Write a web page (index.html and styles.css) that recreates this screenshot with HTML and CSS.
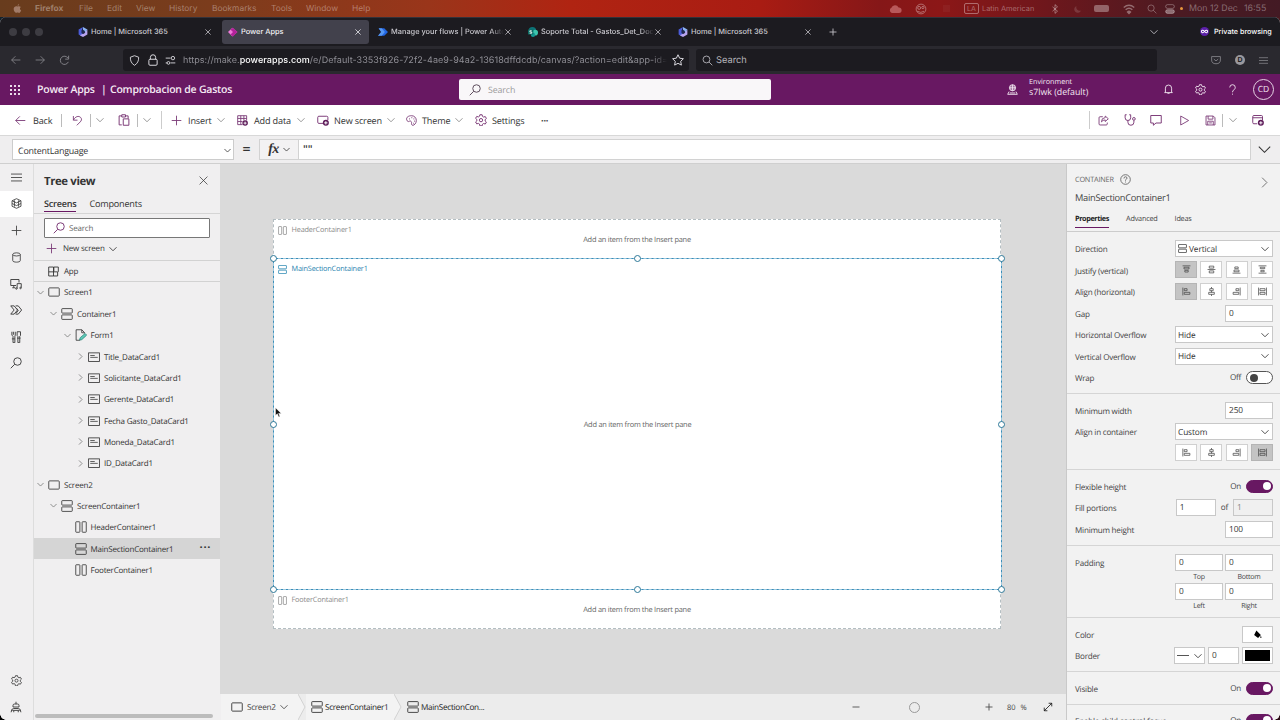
FILE: index.html
```html
<!DOCTYPE html>
<html lang="es">
<head>
<meta charset="utf-8">
<title>Power Apps | Comprobacion de Gastos</title>
<link rel="stylesheet" href="styles.css">
</head>
<body>
<svg class="defs">
<symbol id="chev" viewBox="0 0 16 16"><path d="M1 4.500l7 7 7-7"/></symbol>
<symbol id="right" viewBox="0 0 16 16"><path d="M4.500 1l7 7-7 7"/></symbol>
<symbol id="x" viewBox="0 0 16 16"><path d="M1 1l14 14M15 1L1 15"/></symbol>
<symbol id="plus" viewBox="0 0 16 16"><path d="M8 1v14M1 8h14"/></symbol>
<symbol id="minus" viewBox="0 0 16 16"><path d="M1 8h14"/></symbol>
<symbol id="back" viewBox="0 0 16 16"><path d="M15 8H1M7 2L1 8l6 6"/></symbol>
<symbol id="fwd" viewBox="0 0 16 16"><path d="M1 8h14M9 2l6 6-6 6"/></symbol>
<symbol id="reload" viewBox="0 0 16 16"><path d="M13.500 10A6 6 0 1 1 13 4.500M14 1v5H9"/></symbol>
<symbol id="menu" viewBox="0 0 16 16"><path d="M0 3h16M0 8h16M0 13h16"/></symbol>
<symbol id="mag" viewBox="0 0 16 16"><circle cx="10" cy="6" r="5"/><path d="M6.300 9.700L1 15"/></symbol>
<symbol id="magL" viewBox="0 0 16 16"><circle cx="6.500" cy="6.500" r="5"/><path d="M10.300 10.300L15 15"/></symbol>
<symbol id="gear" viewBox="0 0 16 16"><path d="M6.500 1h3l.5 2.200 1.500.9 2.200-.7 1.500 2.600-1.700 1.500v1.800l1.700 1.500-1.500 2.600-2.200-.7-1.500.9-.5 2.200h-3L6 13.400l-1.500-.9-2.200.7L.8 10.600l1.700-1.500V7.300L.8 5.800l1.500-2.600 2.200.7L6 3z"/><circle cx="8" cy="8.200" r="2.200"/></symbol>
<symbol id="rect" viewBox="0 0 16 16"><rect x="1" y="2.500" width="14" height="11" rx="1"/></symbol>
<symbol id="vert" viewBox="0 0 16 16"><rect x="1" y=".8" width="14" height="6" rx=".8"/><rect x="1" y="9.200" width="14" height="6" rx=".8"/></symbol>
<symbol id="horz" viewBox="0 0 16 16"><rect x="1" y="1" width="5.500" height="14" rx=".8"/><rect x="9.500" y="1" width="5.500" height="14" rx=".8"/></symbol>
<symbol id="card" viewBox="0 0 16 16"><rect x=".8" y="2.500" width="14.400" height="11.500"/><path d="M3 6h6M3 8.500h10" stroke-width="1"/></symbol>
<symbol id="app" viewBox="0 0 16 16"><path d="M1 1.500h7v13H1zM1 8.500h13v6H8M8.500 8V1.500H15v7"/></symbol>
<symbol id="form" viewBox="0 0 16 16"><path d="M7 15H1.500V1H9l3.500 3.500V6M9 1v4h3.500"/><path class="teal" d="M6 14.500l1-3L13.500 6l2 2.200-6.500 6z"/></symbol>
<symbol id="undo" viewBox="0 0 16 16"><path d="M2 1.500v6h6M2 7.500C5 1.500 10 1 12.500 3.500s1 5-.5 6.500l-5 5"/></symbol>
<symbol id="paste" viewBox="0 0 16 16"><path d="M5 14.500H1.500v-12H5M10 2.500h3.500V6M5 1h5v3H5zM7 6.500h7.500V15H7z"/></symbol>
<symbol id="data" viewBox="0 0 16 16"><path d="M8 14H1V1h13v7M1 5h13M1 9.500h7M5.500 1v13M10 1v7"/><circle class="solid" cx="11.800" cy="11.800" r="4"/><path class="knock" d="M11.800 9.600V14M9.600 11.800H14"/></symbol>
<symbol id="newscr" viewBox="0 0 16 16"><path d="M8 12.500H2.500Q1 12.500 1 11V4.500Q1 3 2.500 3H13q1.500 0 1.500 1.500V8"/><circle class="solid" cx="11.800" cy="11.800" r="4"/><path class="knock" d="M11.800 9.600V14M9.600 11.800H14"/></symbol>
<symbol id="theme" viewBox="0 0 16 16"><path d="M1 7C0 3 4 1 8 1s7 3 7 7-3 7-5 7-2-2-2-3 .5-2-1-3-3 1-4 .5S1.200 8 1 7z"/><path d="M4.500 5.500h1M8 3.800h1M11 5.500h1M12 9h1M10.500 12h1" stroke-width="1.800"/></symbol>
<symbol id="share" viewBox="0 0 16 16"><path d="M7 2.500H3Q1.500 2.500 1.500 4v9q0 1.500 1.500 1.500h9q1.500 0 1.500-1.500v-2M10.500 1.500L15 5.500l-4.500 4V7.200Q7 7 5 10q0-6 5.500-6.200z"/></symbol>
<symbol id="steth" viewBox="0 0 16 16"><path d="M3.500 1H1.500v4a3.700 3.700 0 0 0 7.400 0V1H7M5.200 8.700V11a4 4 0 0 0 8 0V8.500"/><circle cx="13.200" cy="6.500" r="1.800"/></symbol>
<symbol id="chat" viewBox="0 0 16 16"><path d="M1 2h14v10H8l-3.500 3v-3H1z"/></symbol>
<symbol id="play" viewBox="0 0 16 16"><path d="M2.500 1.500L14 8 2.500 14.500z"/></symbol>
<symbol id="save" viewBox="0 0 16 16"><path d="M1.500 1.500H12L14.500 4v10.500h-13zM4.500 1.500V6h7V1.500M4 14.500V9h8v5.500M6 11.500h4"/></symbol>
<symbol id="pub" viewBox="0 0 16 16"><path d="M7 13H2.500Q1 13 1 11.500v-8Q1 2 2.500 2h10Q14 2 14 3.500V8M1 5h13"/><circle class="solid" cx="11.800" cy="11.800" r="4"/><path class="knock" d="M11.800 9.600V14M9.600 11.800H14"/></symbol>
<symbol id="layers" viewBox="0 0 16 16"><path d="M8 1l6.500 3L8 7 1.500 4zM1.500 4v8L8 15l6.500-3V4M1.500 8L8 11l6.500-3M5 3.500v9M11 3.500v9"/></symbol>
<symbol id="db" viewBox="0 0 16 16"><ellipse cx="8" cy="3.500" rx="5.500" ry="2.300"/><path d="M2.500 3.500v9c0 3 11 3 11 0v-9"/></symbol>
<symbol id="media" viewBox="0 0 16 16"><path d="M8 10H1V2h11v4M3 13h4M5 10v3"/><path d="M9.500 14V7.500H15V13"/><circle cx="8.500" cy="14" r="1"/><circle cx="14" cy="13.300" r="1"/></symbol>
<symbol id="flow" viewBox="0 0 16 16"><path d="M1 2.500h4.500L10 8l-4.500 5.500H1L5.500 8zM7.500 2.500H11L15.500 8 11 13.500H7.500M8.500 5.500L11 8.500l-3 4"/></symbol>
<symbol id="tools" viewBox="0 0 16 16"><path d="M2.500 1v4.500L4 7v8.500h2.500V7L7 5.500V1M4.500 1v4M9.500 1v5l1 1v8.500H13V7l1-1V1zM9.500 9.500H14M2.500 10.500h4"/></symbol>
<symbol id="bot" viewBox="0 0 16 16"><path d="M8 1v3M4 8V6q0-2 2-2h4q2 0 2 2v2zM1.500 15q0-5 3.500-5h6q3.500 0 3.500 5M3 12.500h10M5 15v-2M11 15v-2"/></symbol>
<symbol id="bell" viewBox="0 0 16 16"><path d="M2 12.500h12M3.500 12.500V6q0-4.500 4.500-4.500T12.500 6v6.500M6.500 13q1.500 3 3 0"/></symbol>
<symbol id="env" viewBox="0 0 16 16"><circle cx="8" cy="5.500" r="4.500"/><path d="M3.500 5.500h9M8 1v9M6 2q-1 3.500 0 7M10 2q1 3.500 0 7M3 11L1 15h14l-2-4M4 13h8"/></symbol>
<symbol id="m365" viewBox="0 0 16 16"><path d="M8 0l7 4-3 5-4-2z" fill="#8db4f5" stroke="none"/><path d="M8 0L1 4v8l5 3 2-5-2-4z" fill="#4b5cd8" stroke="none"/><path d="M15 4v8l-7 4-5-3 8-4z" fill="#b9a4ef" stroke="none"/><path d="M5.500 5.500L8 4.500l3 2v3L8 11 5.500 9.500z" fill="#20284f" stroke="none"/></symbol>
<symbol id="papps" viewBox="0 0 16 16"><path d="M7 1l8 7-8 7-7-7z" fill="#f07ada" stroke="none"/><path d="M8 1l7 7-7 7-4-3 4-4-4-4z" fill="#b3229a" stroke="none"/></symbol>
<symbol id="pauto" viewBox="0 0 16 16"><path d="M1 2h9l6 6-6 6H0l5-6z" fill="#2266e3" stroke="none"/><path d="M1 2h5l5 6-5 6H0l5-6z" fill="#6aa9f7" stroke="none" opacity=".75"/></symbol>
<symbol id="sp" viewBox="0 0 16 16"><circle cx="7" cy="6" r="6" fill="#0d7377" stroke="none"/><circle cx="11.500" cy="9" r="4.500" fill="#3cc5ad" stroke="none"/><circle cx="8" cy="12.500" r="3.500" fill="#169a93" stroke="none"/><rect x="0" y="4" width="8.500" height="8" rx="1" fill="#0b6b63" stroke="none"/><path d="M6 6H3v2h3v2H2.500" stroke="#fff"/></symbol>
<symbol id="j1" viewBox="0 0 16 16"><path d="M1 1.500h14M3.500 4h9v3h-9zM5 9.500h6v3H5z"/></symbol>
<symbol id="j2" viewBox="0 0 16 16"><path d="M4 2h8v3.500H4zM4 10.500h8V14H4zM1 8h14"/></symbol>
<symbol id="j3" viewBox="0 0 16 16"><path d="M1 14.500h14M5 3.500h6v3H5zM3.500 9h9v3h-9z"/></symbol>
<symbol id="j4" viewBox="0 0 16 16"><path d="M1 1.500h14M1 14.500h14M4 4h8v2.500H4zM5 9.500h6V12H5z"/></symbol>
<symbol id="a1" viewBox="0 0 16 16"><path d="M1.500 1v14M4 3h5v3.500H4zM4 9.500h10V13H4z"/></symbol>
<symbol id="a2" viewBox="0 0 16 16"><path d="M8 0v3M8 6.500v3M8 13v3M5 3h6v3.500H5zM3 9.500h10V13H3z"/></symbol>
<symbol id="a3" viewBox="0 0 16 16"><path d="M14.500 1v14M7 3h5v3.500H7zM2 9.500h10V13H2z"/></symbol>
<symbol id="a4" viewBox="0 0 16 16"><path d="M1 1v14M15 1v14M3.500 3h9v3.500h-9zM3.500 9.500h9V13h-9z"/></symbol>
</svg>

<div class="screen">
<div class="macbar">
<svg class="apple" viewBox="0 0 16 16"><path d="M11 0q0 3-3 3.500Q8 1 11 0zM8 4.500c2-1 4.500-1 6 1-2.500 1.500-2 5 .5 6-1.500 3.500-3 5-4.500 4-1.500-.7-2-.7-3.500 0C4 16.500 1 12 1.200 8.500 1.500 4.500 5 3.200 8 4.500z"/></svg>
<b>Firefox</b><span>File</span><span>Edit</span><span>View</span><span>History</span><span>Bookmarks</span><span>Tools</span><span>Window</span><span>Help</span>
<svg class="cloud" viewBox="0 0 16 10"><path d="M4 10a3.500 3.500 0 0 1-.5-6.500 5 5 0 0 1 9-.5A3.500 3.500 0 0 1 13 10z"/></svg>
<svg class="i s12" viewBox="0 0 16 16"><circle cx="8" cy="8" r="6.500"/><circle cx="5.500" cy="6.500" r="2"/><circle cx="10.500" cy="6" r="1.500"/><path d="M3 11q5 3 9 0"/></svg>
<i class="ghost"></i>
<span class="la">LA</span><span class="lang">Latin American</span>
<svg class="i s10" viewBox="0 0 16 16"><path d="M4 4.500l8 7L8 15V1l4 3.500-8 7" stroke-width="1.600"/></svg>
<svg class="moon" viewBox="0 0 16 16"><path d="M5 2a7 7 0 0 0 9 9A7 7 0 1 1 5 2z"/></svg>
<i class="batt"></i>
<svg class="i s12" viewBox="0 0 16 16"><path d="M1 6q7-6 14 0M3.500 9q4.500-4 9 0M6 12q2-2 4 0l-2 2z" stroke-width="1.800"/></svg>
<svg class="i s10"><use href="#magL"/></svg>
<svg class="i s10" viewBox="0 0 16 16"><rect x="1" y="1" width="14" height="6" rx="3"/><rect x="1" y="9" width="14" height="6" rx="3" fill="currentColor"/></svg>
<i class="dot"></i><span class="clock">Mon 12 Dec</span><span class="clock">16:55</span>
</div>

<div class="window">
<div class="tabbar">
<div class="lights"><i></i><i></i><i></i></div>
<div class="tab"><svg class="i s10"><use href="#m365"/></svg><span>Home | Microsoft 365</span><svg class="i s6"><use href="#x"/></svg></div>
<div class="tab on"><svg class="i s10"><use href="#papps"/></svg><span>Power Apps</span><svg class="i s6"><use href="#x"/></svg></div>
<div class="tab"><svg class="i s10"><use href="#pauto"/></svg><span class="fade">Manage your flows | Power Auto</span><svg class="i s6"><use href="#x"/></svg></div>
<div class="tab"><svg class="i s10"><use href="#sp"/></svg><span class="fade">Soporte Total - Gastos_Det_Doc</span><svg class="i s6"><use href="#x"/></svg></div>
<div class="tab"><svg class="i s10"><use href="#m365"/></svg><span>Home | Microsoft 365</span><svg class="i s6"><use href="#x"/></svg></div>
<svg class="i s8 newtab"><use href="#plus"/></svg>
<svg class="i s8 alltabs"><use href="#chev"/></svg>
<svg class="s9" viewBox="0 0 16 16"><circle cx="8" cy="8" r="8" fill="#5b1fa8"/><path d="M8 8C5 4.500 2.500 6 2.500 8S5 11.500 8 8s5.500-2 5.500 0S11 11.500 8 8z" fill="none" stroke="#fff" stroke-width="1.800"/></svg>
<span class="priv">Private browsing</span>
</div>

<div class="urlbar">
<svg class="i s10"><use href="#back"/></svg><svg class="i s10"><use href="#fwd"/></svg><svg class="i s11"><use href="#reload"/></svg>
<div class="url">
<svg class="i s11" viewBox="0 0 16 16"><path d="M8 1l6 2.200q.5 8-6 11.800-6.500-3.800-6-11.800z"/></svg>
<svg class="i s12" viewBox="0 0 16 16"><rect x="2.500" y="7" width="11" height="8" rx="1.500"/><path d="M4.500 7V4.500a3.500 3.500 0 0 1 7 0V7"/></svg>
<svg class="i s11" viewBox="0 0 16 16"><path d="M1 4.500h7M8 11.500h7M1 11.500h2" /><circle cx="11.500" cy="4.500" r="2.500"/><circle cx="5" cy="11.500" r="2"/></svg>
<span class="addr">https://make.<b>powerapps.com</b>/e/Default-3353f926-72f2-4ae9-94a2-13618dffdcdb/canvas/?action=edit&amp;app-id=</span>
<svg class="i s12" viewBox="0 0 16 16"><path d="M8 1l2.200 4.600 5 .7-3.600 3.500.9 5L8 12.400l-4.500 2.400.9-5L.8 6.300l5-.7z"/></svg>
</div>
<div class="find"><svg class="i s11"><use href="#magL"/></svg><span>Search</span></div>
<svg class="i s10" viewBox="0 0 16 16"><path d="M1 2.500h14V8a7 6 0 0 1-14 0zM4.500 6.500L8 9.500l3.500-3"/></svg>
<span class="avD">D</span>
<svg class="i s9"><use href="#menu"/></svg>
</div>

<div class="brand">
<div class="waffle"><i></i><i></i><i></i><i></i><i></i><i></i><i></i><i></i><i></i></div>
<span class="b1">Power Apps</span><span class="b1 bar">|</span><span class="b1">Comprobacion de Gastos</span>
<div class="bsearch"><svg class="i s12"><use href="#mag"/></svg><span>Search</span></div>
<svg class="i s11"><use href="#env"/></svg>
<div class="envt"><span>Environment</span><strong>s7lwk (default)</strong></div>
<svg class="i s11"><use href="#bell"/></svg>
<svg class="i s11"><use href="#gear"/></svg>
<svg class="i s11" viewBox="0 0 16 16"><path d="M4 5q0-4 4-4t4 4q0 2-2 3.500T8 12M8 14v1.500"/></svg>
<span class="cd">CD</span>
</div>

<div class="cmd">
<svg class="i s11 p"><use href="#back"/></svg><span>Back</span><i class="sep"></i>
<svg class="i s11 p"><use href="#undo"/></svg><i class="sep"></i><svg class="i s8"><use href="#chev"/></svg>
<svg class="i s12 p"><use href="#paste"/></svg><i class="sep"></i><svg class="i s8"><use href="#chev"/></svg><i class="sep tall"></i>
<svg class="i s11 p"><use href="#plus"/></svg><span>Insert</span><svg class="i s8"><use href="#chev"/></svg>
<svg class="i s11 p"><use href="#data"/></svg><span>Add data</span><svg class="i s8"><use href="#chev"/></svg>
<svg class="i s12 p"><use href="#newscr"/></svg><span>New screen</span><svg class="i s8"><use href="#chev"/></svg>
<svg class="i s11 p"><use href="#theme"/></svg><span>Theme</span><svg class="i s8"><use href="#chev"/></svg>
<svg class="i s12 p"><use href="#gear"/></svg><span>Settings</span><span class="more">···</span>
<i class="sep tall"></i>
<svg class="i s11 p"><use href="#share"/></svg><svg class="i s12 p"><use href="#steth"/></svg><svg class="i s12 p"><use href="#chat"/></svg><svg class="i s11 p"><use href="#play"/></svg><svg class="i s11 p"><use href="#save"/></svg><i class="sep"></i><svg class="i s8"><use href="#chev"/></svg><svg class="i s12 p"><use href="#pub"/></svg>
</div>

<div class="formula">
<div class="prop"><span>ContentLanguage</span><svg class="i s7"><use href="#chev"/></svg></div>
<span class="eq">=</span>
<div class="fx"><em>fx</em><svg class="i s7"><use href="#chev"/></svg></div>
<div class="expr">""</div>
<svg class="i s13 fchev"><use href="#chev"/></svg>
</div>

<div class="body">
<div class="rail">
<div><svg class="i s11"><use href="#menu"/></svg></div><div class="on"><svg class="i s11"><use href="#layers"/></svg></div><div><svg class="i s11"><use href="#plus"/></svg></div><div><svg class="i s11"><use href="#db"/></svg></div><div><svg class="i s12"><use href="#media"/></svg></div><div><svg class="i s12"><use href="#flow"/></svg></div><div><svg class="i s12"><use href="#tools"/></svg></div><div><svg class="i s12"><use href="#mag"/></svg></div>
<div class="push"><svg class="i s11"><use href="#gear"/></svg></div><div><svg class="i s12"><use href="#bot"/></svg></div>
</div>

<div class="tree">
<div class="thead"><h2>Tree view</h2><svg class="i s9"><use href="#x"/></svg></div>
<div class="ttabs"><span class="on">Screens</span><span>Components</span></div>
<div class="tsearch"><svg class="i s12 p"><use href="#mag"/></svg><span>Search</span></div>
<div class="tnew"><svg class="i s11 p"><use href="#plus"/></svg><span>New screen</span><svg class="i s8"><use href="#chev"/></svg></div>
<div class="tapp"><svg class="i s11"><use href="#app"/></svg><span>App</span></div>
<div class="rows">
<div class="row l0"><svg class="i s7 g"><use href="#chev"/></svg><svg class="i s12"><use href="#rect"/></svg><span>Screen1</span></div>
<div class="row l1"><svg class="i s7 g"><use href="#chev"/></svg><svg class="i s12"><use href="#vert"/></svg><span>Container1</span></div>
<div class="row l2"><svg class="i s7 g"><use href="#chev"/></svg><svg class="i s12"><use href="#form"/></svg><span>Form1</span></div>
<div class="row l3"><svg class="i s7 g"><use href="#right"/></svg><svg class="i s12"><use href="#card"/></svg><span>Title_DataCard1</span></div>
<div class="row l3"><svg class="i s7 g"><use href="#right"/></svg><svg class="i s12"><use href="#card"/></svg><span>Solicitante_DataCard1</span></div>
<div class="row l3"><svg class="i s7 g"><use href="#right"/></svg><svg class="i s12"><use href="#card"/></svg><span>Gerente_DataCard1</span></div>
<div class="row l3"><svg class="i s7 g"><use href="#right"/></svg><svg class="i s12"><use href="#card"/></svg><span>Fecha Gasto_DataCard1</span></div>
<div class="row l3"><svg class="i s7 g"><use href="#right"/></svg><svg class="i s12"><use href="#card"/></svg><span>Moneda_DataCard1</span></div>
<div class="row l3"><svg class="i s7 g"><use href="#right"/></svg><svg class="i s12"><use href="#card"/></svg><span>ID_DataCard1</span></div>
<div class="row l0"><svg class="i s7 g"><use href="#chev"/></svg><svg class="i s12"><use href="#rect"/></svg><span>Screen2</span></div>
<div class="row l1"><svg class="i s7 g"><use href="#chev"/></svg><svg class="i s12"><use href="#vert"/></svg><span>ScreenContainer1</span></div>
<div class="row l2"><i></i><svg class="i s12"><use href="#horz"/></svg><span>HeaderContainer1</span></div>
<div class="row l2 sel"><i></i><svg class="i s12"><use href="#vert"/></svg><span>MainSectionContainer1</span><b>···</b></div>
<div class="row l2"><i></i><svg class="i s12"><use href="#horz"/></svg><span>FooterContainer1</span></div>
</div>
<div class="hscroll"></div>
</div>

<div class="center">
<div class="stage">
<div class="artboard">
<div class="cont"><div class="lbl"><svg class="i s9"><use href="#horz"/></svg><span>HeaderContainer1</span></div><p>Add an item from the Insert pane</p></div>
<div class="cont main"><div class="lbl"><svg class="i s9"><use href="#vert"/></svg><span>MainSectionContainer1</span></div><p>Add an item from the Insert pane</p>
<i class="h tl"></i><i class="h tc"></i><i class="h tr"></i><i class="h ml"></i><i class="h mr"></i><i class="h bl"></i><i class="h bc"></i><i class="h br"></i></div>
<div class="cont"><div class="lbl"><svg class="i s9"><use href="#horz"/></svg><span>FooterContainer1</span></div><p>Add an item from the Insert pane</p></div>
</div>
</div>
<div class="status">
<div class="crumb c1"><svg class="i s12"><use href="#rect"/></svg><span>Screen2</span><svg class="i s8"><use href="#chev"/></svg></div>
<svg class="arrow" viewBox="0 0 8 26"><path class="af" d="M0 0l7 13-7 13z"/><path d="M0 0l7 13-7 13"/></svg>
<div class="crumb c2"><svg class="i s12"><use href="#vert"/></svg><span>ScreenContainer1</span></div>
<svg class="arrow" viewBox="0 0 8 26"><path class="af" d="M0 0l7 13-7 13z"/><path d="M0 0l7 13-7 13"/></svg>
<div class="crumb c3"><svg class="i s12"><use href="#vert"/></svg><span>MainSectionCon...</span></div>
<svg class="i s8 zo"><use href="#minus"/></svg><i class="knob"></i><svg class="i s8"><use href="#plus"/></svg><span class="pct">80</span><span class="pct">%</span>
<svg class="i s10 fit" viewBox="0 0 16 16"><path d="M2 14L14 2M9 2h5v5M2 9v5h5"/></svg>
</div>
</div>

<div class="props">
<div class="phead">
<div class="ptop"><span>CONTAINER</span><svg class="i s11" viewBox="0 0 16 16"><circle cx="8" cy="8" r="7"/><path d="M5.800 6.500q0-2.500 2.200-2.500t2.200 2Q10 7.500 8 8.500v1.200M8 11v1.300"/></svg><svg class="i s11"><use href="#right"/></svg></div>
<div class="pname">MainSectionContainer1</div>
<div class="ptabs"><span class="on">Properties</span><span>Advanced</span><span>Ideas</span></div>
</div>
<div class="sec layout">
<div class="f"><label>Direction</label><div class="dd"><svg class="i s9"><use href="#vert"/></svg><span>Vertical</span><svg class="i s8"><use href="#chev"/></svg></div></div>
<div class="f"><label>Justify (vertical)</label><div class="btns"><u class="on"><svg class="i s9"><use href="#j1"/></svg></u><u><svg class="i s9"><use href="#j2"/></svg></u><u><svg class="i s9"><use href="#j3"/></svg></u><u><svg class="i s9"><use href="#j4"/></svg></u></div></div>
<div class="f"><label>Align (horizontal)</label><div class="btns"><u class="on"><svg class="i s9"><use href="#a1"/></svg></u><u><svg class="i s9"><use href="#a2"/></svg></u><u><svg class="i s9"><use href="#a3"/></svg></u><u><svg class="i s9"><use href="#a4"/></svg></u></div></div>
<div class="f"><label>Gap</label><div class="in">0</div></div>
<div class="f"><label>Horizontal Overflow</label><div class="dd"><span>Hide</span><svg class="i s8"><use href="#chev"/></svg></div></div>
<div class="f"><label>Vertical Overflow</label><div class="dd"><span>Hide</span><svg class="i s8"><use href="#chev"/></svg></div></div>
<div class="f"><label>Wrap</label><span class="st">Off</span><i class="tog"></i></div>
</div>
<div class="sec size">
<div class="f"><label>Minimum width</label><div class="in">250</div></div>
<div class="f"><label>Align in container</label><div class="dd"><span>Custom</span><svg class="i s8"><use href="#chev"/></svg></div></div>
<div class="f"><label></label><div class="btns"><u><svg class="i s9"><use href="#a1"/></svg></u><u><svg class="i s9"><use href="#a2"/></svg></u><u><svg class="i s9"><use href="#a3"/></svg></u><u class="on"><svg class="i s9"><use href="#a4"/></svg></u></div></div>
</div>
<div class="sec size">
<div class="f"><label>Flexible height</label><span class="st">On</span><i class="tog on"></i></div>
<div class="f"><label>Fill portions</label><div class="in n40">1</div><span class="of">of</span><div class="in n40 dis">1</div></div>
<div class="f"><label>Minimum height</label><div class="in">100</div></div>
</div>
<div class="sec padding">
<label>Padding</label>
<div class="pads"><div class="in">0</div><div class="in">0</div><small>Top</small><small>Bottom</small><div class="in">0</div><div class="in">0</div><small>Left</small><small>Right</small></div>
</div>
<div class="sec paint">
<div class="f"><label>Color</label><div class="sw"><svg class="s9" viewBox="0 0 16 16"><path d="M6 1l8 8-5 5-7-5zM14 10q2 3 .5 4t-1.500-1z"/></svg></div></div>
<div class="f"><label>Border</label><div class="bst"><i></i><svg class="i s8"><use href="#chev"/></svg></div><div class="in n30">0</div><div class="sw"><b></b></div></div>
</div>
<div class="sec visible"><div class="f"><label>Visible</label><span class="st">On</span><i class="tog on"></i></div></div>
<div class="sec last"><div class="f"><label>Enable child control focus</label><span class="st">On</span><i class="tog on"></i></div></div>
</div>
</div>
</div>
<svg class="cursor" viewBox="0 0 8 12"><path d="M.5.5v9l2.200-2 1.500 3.700 1.500-.7L4.200 7h3z" fill="#111" stroke="#fff" stroke-width=".6"/></svg>
<i class="corner left"></i><i class="corner rt"></i>
</div>
</body>
</html>
```
FILE: styles.css
```css
* { box-sizing: border-box; }
body { margin: 0; font-family: "Open Sans", "Noto Sans", sans-serif; font-size: 8px; color: #333; text-rendering: geometricPrecision; }
i, em, u { font-style: normal; text-decoration: none; }
h2, p { margin: 0; }
span, strong, label, p, h2, small { white-space: nowrap; }
.defs { display: none; }
svg { display: block; flex: none; }
.i { fill: none; stroke: currentColor; stroke-width: 1.3; overflow: visible; }
.s6 { width: 6px; height: 6px; stroke-width: 2; } .s7 { width: 7px; height: 7px; stroke-width: 1.800; } .s8 { width: 8px; height: 8px; stroke-width: 1.700; }
.s9 { width: 9px; height: 9px; } .s10 { width: 10px; height: 10px; } .s11 { width: 11px; height: 11px; }
.s12 { width: 12px; height: 12px; } .s13 { width: 13px; height: 13px; }
.solid { fill: #5c1a58; stroke: none; }
.knock { stroke: #fff; }
.teal { fill: #5fc9b8; stroke: #2b8d7f; }
.p { color: #7b3a77; }
.g { color: #777; }

.screen { position: relative; width: 1280px; height: 720px; overflow: hidden; display: grid; grid-template-rows: 17px 703px; background: linear-gradient(90deg, #13222b 0, #13222b 50%, #8a1a18 50%, #4b1a20 100%); }
.macbar { display: grid; grid-template-columns: 22px 44px 28px 29px 33px 43px 59px 35px 46px 536px 27px 28px 21px 18px 68px 24px 20px 29px 24px 18px 15px 9px 55px 30px; align-items: center; padding: 0 0 0 13px; font: 8.400px Inter, sans-serif; color: rgba(255,255,255,.36); background: linear-gradient(90deg, #683c1d 0, #7d3c1c 230px, #9a351a 430px, #b02412 570px, #a91c13 760px, #851718 880px, #8c1717 940px, #6d171c 1050px, #4b1a22 1180px, #431a24 1280px); }
.macbar b { font-weight: 700; }
.macbar .lang { font-size: 7.400px; }
.macbar .clock { font-size: 8.800px; }
.macbar svg.apple { width: 9px; height: 11px; fill: #a17b68; }
.cloud { width: 14px; height: 8px; fill: #b8585a; }
.ghost { width: 7px; height: 7px; background: rgba(255,255,255,.04); }
.la { width: 15px; height: 11px; border: 1px solid currentColor; border-radius: 2px; font-size: 7px; line-height: 9px; text-align: center; }
.moon { width: 8px; height: 8px; fill: rgba(255,255,255,.14); }
.batt { width: 15px; height: 7px; border-radius: 2px; background: rgba(255,255,255,.33); }
.dot { width: 3px; height: 3px; border-radius: 50%; background: #e8963c; }

.window { display: grid; grid-template-rows: 29px 28px 31px 30px 28px 557px; border-radius: 6px 6px 0 0; overflow: hidden; background: #f0eff0; }
.tabbar { display: flex; align-items: center; padding-bottom: 1px; background: #1c1b20; color: #c9c8ce; font: 500 7.400px Inter, sans-serif; border-top: 1px solid #33323a; }
.lights { display: flex; gap: 5px; width: 72px; padding-left: 9px; }
.lights i { width: 8px; height: 8px; border-radius: 50%; background: #3d3c42; }
.tab { display: grid; grid-template-columns: 13px 114px 6px; align-items: center; width: 147px; margin-right: 3px; height: 24px; padding-left: 6px; border-radius: 3px; }
.tab.on { background: #42414c; color: #f2f2f5; }
.tab span.fade { width: 113px; -webkit-mask-image: linear-gradient(90deg, #000 88%, transparent); mask-image: linear-gradient(90deg, #000 88%, transparent); }
.newtab { margin-left: 7px; }
.alltabs { margin-left: 313px; margin-right: 42px; }
.priv { margin-left: 5px; color: #fff; font-size: 7.200px; }

.urlbar { display: grid; grid-template-columns: 24px 24px 64px 573px 515px 24px 24px 16px; align-items: center; padding-left: 11px; background: #2a292f; color: #8b8a90; }
.url, .find { display: grid; align-items: center; height: 22px; border-radius: 3px; background: #1c1b20; color: #dddce2; }
.url { width: 566px; grid-template-columns: 18px 18px 18px 489px 12px; padding-left: 6px; }
.find { width: 461px; grid-template-columns: 14px 1fr; padding-left: 6px; font: 9.300px Inter, sans-serif; color: #b5b4ba; }
.addr { font: 9px Inter, sans-serif; color: #8f8e95; letter-spacing: .06px; width: 484px; -webkit-mask-image: linear-gradient(90deg, #000 97%, transparent); mask-image: linear-gradient(90deg, #000 97%, transparent); }
.addr b { color: #fff; font-weight: 500; }
.avD { width: 10px; height: 10px; border-radius: 50%; background: #99989e; color: #222; font: bold 7px/10px Inter, sans-serif; text-align: center; }

.brand { display: grid; grid-template-columns: 27px 65px 8px 349px 548px 22px 134px 32px 32px 26px 21px; align-items: center; padding-left: 10px; background: #681862; color: #f4eaf3; }
.waffle { display: grid; grid-template-columns: repeat(3, 2px); gap: 2px; }
.waffle i { width: 2px; height: 2px; background: #eadbe9; }
.b1 { font-size: 10.500px; font-weight: 600; letter-spacing: -.22px; padding-top: 1px; }
.bar { margin-left: -1px; }
.bsearch { display: grid; grid-template-columns: 19px 1fr; align-items: center; width: 312px; height: 21px; padding-left: 10px; border-radius: 2px; background: #f9f7f9; color: #5c4a5b; font-size: 8.800px; }
.bsearch span { color: #999; letter-spacing: -.1px; }
.envt { display: grid; font-size: 7.200px; line-height: 10px; margin-top: -4px; }
.envt strong { font-weight: 400; font-size: 8.800px; line-height: 11px; }
.cd { width: 21px; height: 21px; border: 1px solid #e5d3e4; border-radius: 50%; font-size: 8.500px; line-height: 19px; text-align: center; }

.cmd { display: grid; grid-template-columns: 18px 28px 11px 18px 6px 22px 19px 6px 18px 10px 17px 29px 20px 17px 43px 20px 17px 53px 19px 16px 33px 20px 17px 49px 548px 9px 26px 26px 29px 26px 17px 7px 23px 12px; align-items: center; padding-left: 15px; background: #fff; font-size: 9.100px; letter-spacing: -.16px; color: #333; }
.cmd .s8 { color: #777; stroke-width: 1.500; }
.sep { width: 1px; height: 13px; background: #bbb; }
.sep.tall { height: 18px; background: #ccc; }
.more { font-weight: 700; }

.formula { display: grid; grid-template-columns: 222px 25px 40px 952px 1fr; align-items: center; padding-left: 12px; background: #efeeef; border-top: 1px solid #d8d8d8; }
.prop { display: flex; align-items: center; justify-content: space-between; height: 21px; padding: 1px 2px 0 5px; background: #fff; border: 1px solid #ccc; font-size: 8.900px; letter-spacing: -.2px; }
.eq { font-size: 14px; font-weight: 600; text-align: center; }
.fx { display: flex; align-items: center; justify-content: center; gap: 4px; height: 21px; border: 1px solid #d2d2d2; background: #f3f2f3; }
.fx em { font: italic bold 14px "Liberation Serif", serif; letter-spacing: -.5px; }
.expr { height: 21px; padding-left: 4px; line-height: 20px; background: #fff; border: 1px solid #d2d2d2; border-left: 0; font-size: 11px; font-weight: 600; }
.fchev { margin-left: 7px; }

.body { display: grid; grid-template-columns: 33px 188px 845px 214px; border-top: 1px solid #cfcfcf; overflow: hidden; }
.rail { display: flex; flex-direction: column; background: #f0eff0; color: #444; }
.rail div { height: 26.600px; display: grid; place-items: center; padding-right: 1px; }
.rail .on { background: #fff; }
.rail .push { margin-top: auto; }

.tree { display: flex; flex-direction: column; border-left: 1px solid #ddd; background: #f0eff0; overflow: hidden; letter-spacing: -.2px; }
.thead { display: flex; justify-content: space-between; align-items: center; height: 34px; padding: 0 13px 2px 10px; }
.thead h2 { font-size: 11.400px; font-weight: 700; letter-spacing: -.38px; padding-top: 2px; }
.ttabs { display: flex; gap: 13px; height: 16px; padding-left: 10px; border-bottom: 1px solid #d5d5d5; font-size: 9.100px; line-height: 12px; }
.ttabs span { height: 14px; }
.ttabs .on { font-weight: 600; letter-spacing: -.25px; border-bottom: 1.500px solid #681862; }
.tsearch { display: grid; grid-template-columns: 16px 1fr; align-items: center; height: 20px; margin: 4px 11px 0 10px; padding-left: 8px; border: 1px solid #777; border-radius: 1px; background: #fff; font-size: 8px; color: #666; }
.tnew { display: grid; grid-template-columns: 17px 46px 8px; align-items: center; height: 22.500px; padding-left: 12px; border-bottom: 1px solid #d2d2d2; }
.tapp { display: grid; grid-template-columns: 16px 1fr; align-items: center; height: 21.300px; padding: 1px 0 0 14px; border-bottom: 1px solid #d2d2d2; }
.rows { display: grid; grid-auto-rows: 21.350px; }
.row { display: grid; grid-template-columns: 11px 16px 109px 1fr; align-items: center; }
.row span { padding-top: 1px; }
.row .s12 { stroke-width: 1.100; }
.l0 { padding-left: 3px; } .l1 { padding-left: 16px; } .l2 { padding-left: 29.500px; } .l3 { padding-left: 43px; }
.sel { background: #d5d5d5; margin-left: -1px; padding-left: 30.500px; }
.row b { font-size: 11px; line-height: 10px; margin-bottom: 2px; letter-spacing: .8px; }
.hscroll { margin: auto 0 2px 1px; width: 178px; height: 4px; border-radius: 2px; background: #bcbcbc; }

.center { display: grid; grid-template-rows: 530px 26px; }
.stage { background: #dadada; padding: 55px 65px 0 53px; margin-left: -1px; }
.artboard { display: grid; grid-template-rows: 40px 330px 40px; background: #fff; }
.cont { position: relative; display: grid; place-items: center; padding-top: 2px; border: 1px dashed #b4bec2; font-size: 7.400px; letter-spacing: -.22px; color: #666; }
.cont .lbl { position: absolute; left: 4px; top: 5px; display: grid; grid-template-columns: 13.500px 1fr; align-items: center; font-size: 7.300px; letter-spacing: -.16px; color: #8a8a8a; }
.main { z-index: 1; margin: -1px -1px -1px 0; border: 1.500px solid #3a8db8; }
.main::after { content: ""; position: absolute; inset: -1px; border: 1px dashed #9cc8de; pointer-events: none; }
.cont.main .lbl { color: #1f82ae; }
.h { position: absolute; z-index: 1; width: 7px; height: 7px; border: 1px solid #2d7898; border-radius: 50%; background: #fff; }
.tl, .tc, .tr { top: -4px; } .bl, .bc, .br { bottom: -4px; } .ml, .mr { top: calc(50% - 3.500px); }
.tl, .ml, .bl { left: -4px; } .tr, .mr, .br { right: -4px; } .tc, .bc { left: calc(50% - 3.500px); }
.status { display: flex; align-items: center; background: #ececec; font-size: 8.200px; letter-spacing: -.3px; color: #444; }
.status span { padding-top: 1px; }
.crumb { display: grid; align-items: center; height: 26px; background: #f3f3f3; }
.c1 { grid-template-columns: 16px 33px 8px; width: 77px; padding-left: 10px; }
.c2 { grid-template-columns: 14px 1fr; width: 88px; padding-left: 5px; }
.c3 { grid-template-columns: 14px 1fr; width: 90px; padding-left: 5px; background: none; }
.c2 span, .c3 span { color: #222; }
.arrow { width: 8px; height: 26px; fill: none; stroke: #d2d2d2; }
.arrow .af { fill: #f3f3f3; stroke: none; }
.zo { margin-left: 360px; }
.knob { width: 11px; height: 11px; margin: 0 65px 0 49px; border: 1px solid #999; border-radius: 50%; }
.pct { margin-left: 14px; font-size: 7.500px; letter-spacing: 0; }
.pct + .pct { margin-left: 5px; }
.fit { margin-left: 16px; color: #111; }

.props { border-left: 1px solid #c9c9c9; background: #f2f2f2; font-size: 8.100px; letter-spacing: -.22px; color: #444; overflow: hidden; }
.phead { height: 68px; border-bottom: 1px solid #ccc; display: grid; grid-template-rows: 11px 18px 1fr; padding: 10px 0 0 8px; }
.ptop { display: grid; grid-template-columns: 45px 139px 12px; align-items: start; height: 11px; line-height: 13px; font-size: 7.300px; letter-spacing: -.2px; color: #666; }
.ptop svg:last-child { margin-top: 3px; }
.pname { font-size: 9.300px; line-height: 25px; letter-spacing: -.28px; }
.ptabs { display: flex; gap: 17px; padding: 9px 0 4px; font-size: 7.300px; }
.ptabs span { line-height: 15px; }
.ptabs .on { font-weight: 700; letter-spacing: -.4px; color: #222; border-bottom: 1.500px solid #681862; }
.sec { border-bottom: 1.500px solid #d5d5d5; padding-left: 8px; }
.f { display: flex; align-items: center; height: 21.500px; padding-right: 7px; }
.f label { margin-right: auto; padding-top: 1.500px; }
.layout { height: 161.500px; padding-top: 6px; } .size { height: 76px; padding-top: 6px; }
.padding { height: 72px; padding: 8px 7px 0 8px; display: flex; justify-content: space-between; line-height: 19px; }
.paint { height: 54px; padding-top: 6px; } .visible { height: 33px; padding-top: 6px; } .last { padding-top: 5px; }
.dd, .in, .sw, .bst { height: 17px; border: 1px solid #c8c8c8; background: #fff; color: #333; font-size: 8.300px; letter-spacing: -.1px; }
.dd { width: 98px; display: flex; align-items: center; gap: 2px; padding: 0 3px 0 2px; }
.dd span { padding-top: 1px; }
.dd svg:last-child { margin-left: auto; }
.in { width: 48px; padding-left: 3px; line-height: 15px; }
.n40 { width: 40px; } .n30 { width: 31px; }
.dis { background: #f0f0f0; color: #888; }
.btns { display: grid; grid-template-columns: repeat(4, 22px); gap: 3.300px; margin-top: -1px; }
.btns u { height: 17px; display: grid; place-items: center; border: 1px solid #d0d0d0; background: #fff; }
.btns .on { background: #c4c4c4; border-color: #b5b5b5; }
.st { margin-right: 5px; }
.of { margin: 0 5px; }
.tog { width: 27px; height: 13px; padding: 1.500px; border: 1px solid #555; border-radius: 7px; background: #fff; display: flex; }
.tog::before { content: ""; width: 8px; height: 8px; border-radius: 50%; background: #444; margin-left: 1px; }
.tog.on { background: #681862; border-color: #681862; justify-content: flex-end; }
.tog.on::before { background: #fff; }
.pads { display: grid; grid-template-columns: 48px 48px; grid-template-rows: 17px 12px 17px 12px; column-gap: 2px; }
.pads small { font-size: 7px; line-height: 14px; text-align: center; }
.sw { width: 31px; display: grid; place-items: center; }
.sw b { width: 25px; height: 11px; background: #000; }
.bst { width: 31px; display: flex; align-items: center; justify-content: space-between; padding: 0 2px; margin-right: 3px; }
.bst i { width: 12px; height: 1px; background: #555; }
.n30 { margin-right: 3px; }

.cursor { position: absolute; left: 275px; top: 407px; width: 7px; height: 11px; }
.corner { position: absolute; bottom: 0; width: 6px; height: 6px; }
.left { left: 0; background: radial-gradient(circle at 100% 0, transparent 5.500px, #000 6px); }
.rt { right: 0; background: radial-gradient(circle at 0 0, transparent 5.500px, #2a0c14 6px); }
```
